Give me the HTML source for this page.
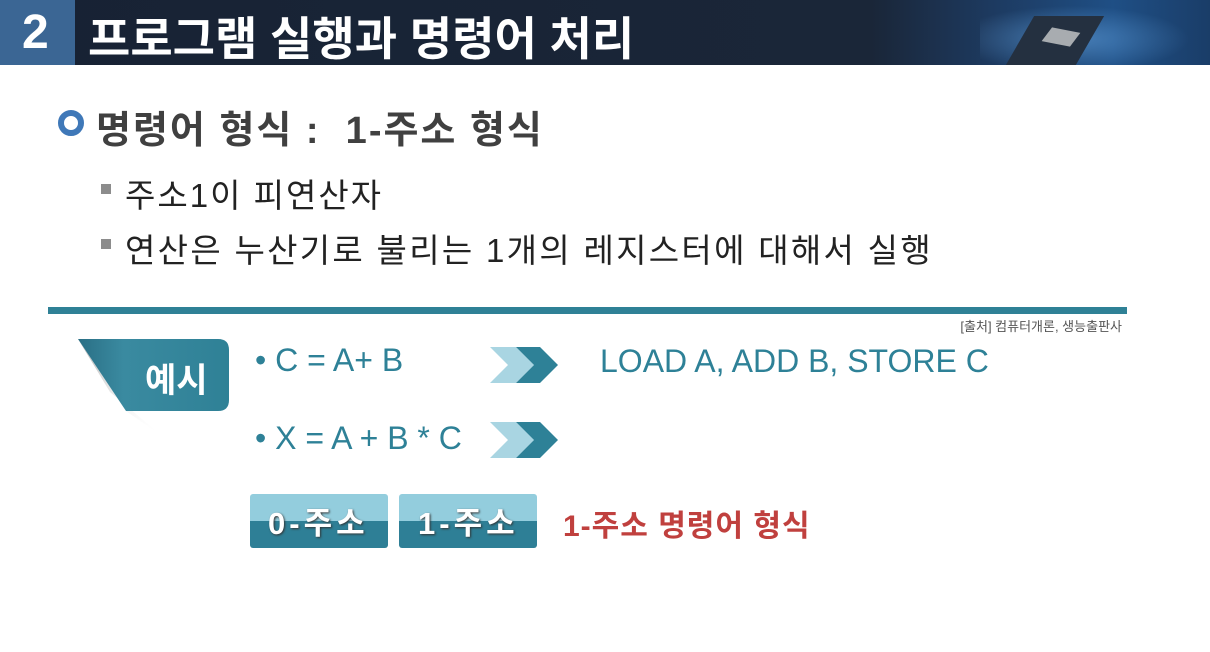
<!DOCTYPE html>
<html><head><meta charset="utf-8"><style>
body{margin:0;width:1210px;height:652px;background:#fff;position:relative;overflow:hidden;font-family:"Liberation Sans","Noto Sans CJK KR",sans-serif}
.a{position:absolute;white-space:nowrap}
</style></head><body>
<div class="a" style="left:0;top:0;width:1210px;height:65px;background:linear-gradient(90deg,#172234 0%,#1a2638 72%,#1d3a60 82%,#1f4f85 92%,#1a3d68 100%)"></div>
<div class="a" style="left:980px;top:0;width:230px;height:65px;background:radial-gradient(ellipse at 40% 60%,rgba(120,190,255,.45),rgba(30,80,150,0) 60%)"></div>
<div class="a" style="left:1020px;top:16px;width:70px;height:49px;background:#243040;transform:skewX(-30deg)"></div>
<div class="a" style="left:1045px;top:30px;width:32px;height:14px;background:#a8acb0;transform:skewX(-30deg) rotate(10deg)"></div>
<div class="a" style="left:0;top:0;width:75px;height:65px;background:#3b6694"></div>
<div class="a" style="left:22px;top:5px;font-size:48px;color:#fff;font-weight:bold">2</div>
<div class="a" style="left:88px;top:3px;font-size:46px;color:#fff;font-weight:bold">프로그램 실행과 명령어 처리</div>

<div class="a" style="left:58px;top:110px;width:14px;height:14px;border:6px solid #3f78b8;border-radius:50%"></div>
<div class="a" style="left:96px;top:99px;font-size:38px;color:#404040;font-weight:bold;letter-spacing:2px">명령어 형식 :&nbsp; 1-주소 형식</div>
<div class="a" style="left:101px;top:184px;width:10px;height:10px;background:#8c8c8c"></div>
<div class="a" style="left:125px;top:169px;font-size:33px;color:#222;letter-spacing:2px">주소1이 피연산자</div>
<div class="a" style="left:101px;top:239px;width:10px;height:10px;background:#8c8c8c"></div>
<div class="a" style="left:125px;top:224px;font-size:33px;color:#222;letter-spacing:2.3px">연산은 누산기로 불리는 1개의 레지스터에 대해서 실행</div>

<div class="a" style="left:48px;top:307px;width:1079px;height:7px;background:#2f8196"></div>
<div class="a" style="right:88px;top:316px;font-size:13px;color:#555">[출처] 컴퓨터개론, 생능출판사</div>

<svg class="a" style="left:70px;top:330px" width="162" height="110"><defs><linearGradient id="g" x1="0" y1="0" x2="1" y2="0"><stop offset="0" stop-color="#2a6f85"/><stop offset=".3" stop-color="#3a8aa0"/><stop offset="1" stop-color="#2f8196"/></linearGradient><linearGradient id="s" x1="0" y1="0" x2="1" y2="1"><stop offset="0" stop-color="#aaa"/><stop offset="1" stop-color="#fff" stop-opacity="0"/></linearGradient></defs><path d="M8 9 L56 81 L92 106 L40 62 Z" fill="url(#s)"/><path d="M8 9 H148 Q159 9 159 20 V70 Q159 81 148 81 H56 Z" fill="url(#g)"/></svg>
<div class="a" style="left:145px;top:353px;font-size:34px;color:#fff;font-weight:bold">예시</div>

<div class="a" style="left:255px;top:342px;font-size:32px;color:#2e8197">• C = A+ B</div>
<div class="a" style="left:255px;top:420px;font-size:32px;color:#2e8197">• X = A + B * C</div>
<svg class="a" style="left:490px;top:347px" width="70" height="36"><polygon points="0,0 26,0 44,18 26,36 0,36 18,18" fill="#a9d5e2"/><polygon points="26,0 50,0 68,18 50,36 26,36 44,18" fill="#2e8197"/></svg>
<svg class="a" style="left:490px;top:422px" width="70" height="36"><polygon points="0,0 26,0 44,18 26,36 0,36 18,18" fill="#a9d5e2"/><polygon points="26,0 50,0 68,18 50,36 26,36 44,18" fill="#2e8197"/></svg>
<div class="a" style="left:600px;top:343px;font-size:32px;color:#2e8197">LOAD A, ADD B, STORE C</div>

<div class="a" style="left:250px;top:494px;width:138px;height:54px;border-radius:3px;overflow:hidden;background:linear-gradient(#93cddd 0,#93cddd 50%,#2e7f96 50%)"></div>
<div class="a" style="left:399px;top:494px;width:138px;height:54px;border-radius:3px;overflow:hidden;background:linear-gradient(#93cddd 0,#93cddd 50%,#2e7f96 50%)"></div>
<div class="a" style="left:268px;top:498px;font-size:31px;color:#fff;font-weight:bold;letter-spacing:4px;text-shadow:1px 1px 2px #333">0-주소</div>
<div class="a" style="left:418px;top:498px;font-size:31px;color:#fff;font-weight:bold;letter-spacing:4px;text-shadow:1px 1px 2px #333">1-주소</div>
<div class="a" style="left:563px;top:501px;font-size:30px;color:#c0403e;font-weight:bold;letter-spacing:1px">1-주소 명령어 형식</div>
</body></html>
